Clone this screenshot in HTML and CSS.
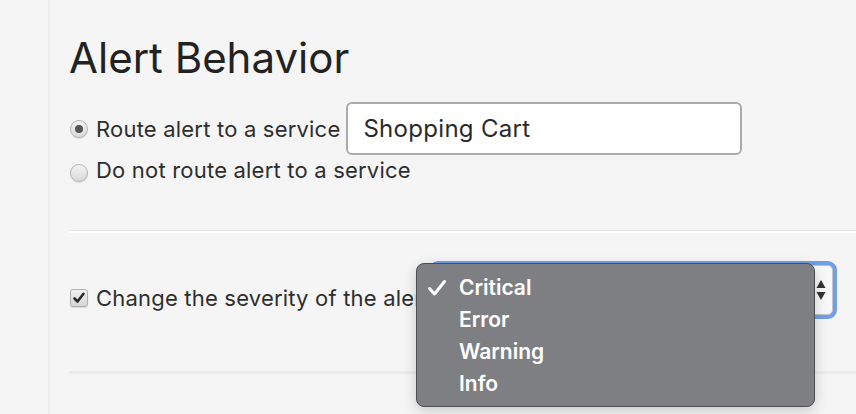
FILE: index.html
```html
<!DOCTYPE html>
<html>
<head>
<meta charset="utf-8">
<link rel="stylesheet" href="styles.css">
</head>
<body>
<div class="page">
  <div class="gutter"></div>
  <main class="content">
    <h1 class="title">Alert Behavior</h1>
    <div class="radio-row first">
      <span class="radio checked"></span>
      <span class="label">Route alert to a service</span>
      <div class="text-input">Shopping Cart</div>
    </div>
    <div class="radio-row second">
      <span class="radio"></span>
      <span class="label">Do not route alert to a service</span>
    </div>
    <div class="divider"></div>
    <div class="check-row">
      <span class="checkbox"><svg width="14" height="14" viewBox="0 0 14 14"><path d="M2.5 7.5 L5.5 10.5 L11.5 2.8" fill="none" stroke="#2a2a2a" stroke-width="2.6" stroke-linecap="round" stroke-linejoin="round"/></svg></span>
      <span class="label check-label">Change the severity of the alert</span>
      <div class="select">
        <span class="arrows"><svg width="10" height="22" viewBox="0 0 10 22"><path d="M5 1 L9.5 9 L0.5 9 Z" fill="#333"/><path d="M5 21 L9.5 13 L0.5 13 Z" fill="#333"/></svg></span>
      </div>
      <ul class="menu">
        <li class="item selected"><svg class="tick" width="20" height="18" viewBox="0 0 20 18"><path d="M2.5 9.5 L7.5 15 L17.5 2.5" fill="none" stroke="#ffffff" stroke-width="3" stroke-linecap="round" stroke-linejoin="round"/></svg>Critical</li>
        <li class="item">Error</li>
        <li class="item">Warning</li>
        <li class="item">Info</li>
      </ul>
    </div>
    <div class="divider bottom"></div>
  </main>
</div>
</body>
</html>
```
FILE: styles.css
```css
html, body {
  margin: 0;
  padding: 0;
  background: #f5f5f5;
  height: 100%;
  overflow: hidden;
}
body {
  font-family: Inter, "Noto Sans", "Liberation Sans", sans-serif;
  color: #2b2b2b;
}
.page {
  display: flex;
  height: 414px;
}
.gutter {
  width: 48px;
  border-right: 2px solid #ececec;
  flex: none;
}
.content {
  flex: 1;
  padding-left: 19px;
  padding-top: 32px;
}
.title {
  margin: 0;
  font-size: 42px;
  font-weight: 400;
  line-height: 52px;
  color: #222;
}
.radio-row {
  display: flex;
  align-items: center;
  font-size: 22px;
  letter-spacing: 0.2px;
}
.radio-row.first {
  margin-top: 18px;
  height: 53px;
}
.radio-row.second {
  height: 30px;
  margin-top: 0;
}
.label {
  white-space: nowrap;
  color: #2e2e2e;
}
.radio {
  width: 18px;
  height: 18px;
  border-radius: 50%;
  box-sizing: border-box;
  border: 1px solid #b5b5b5;
  background: linear-gradient(#f4f4f4, #d9d9d9);
  box-shadow: 0 1px 1px rgba(0,0,0,0.12);
  margin-left: 1px;
  margin-right: 8px;
  position: relative;
  flex: none;
}
.radio-row.second .radio { margin-top: 5px; }
.radio.checked::after {
  content: "";
  position: absolute;
  left: 4px;
  top: 4px;
  width: 8px;
  height: 8px;
  border-radius: 50%;
  background: #555;
}
.text-input {
  margin-left: 6px;
  width: 396px;
  height: 53px;
  box-sizing: border-box;
  border: 2px solid #ababab;
  border-radius: 6px;
  background: #fff;
  padding-left: 15px;
  display: flex;
  align-items: center;
  font-size: 24px;
  letter-spacing: 0.3px;
  color: #2a2a2a;
}
.divider {
  margin-top: 45px;
  border-top: 1px solid #e6e6e6;
  border-bottom: 2px solid #ffffff;
  height: 0;
}
.check-row {
  margin-top: 32px;
  height: 50px;
  display: flex;
  align-items: flex-start;
  font-size: 22px;
  letter-spacing: 0.2px;
  position: relative;
}
.checkbox {
  width: 18px;
  height: 18px;
  box-sizing: border-box;
  border: 1px solid #b0b0b0;
  border-radius: 3px;
  background: linear-gradient(#f0f0f0, #d6d6d6);
  box-shadow: 0 1px 1px rgba(0,0,0,0.12);
  margin-top: 24px;
  margin-left: 1px;
  margin-right: 8px;
  display: flex;
  align-items: center;
  justify-content: center;
  flex: none;
}
.check-label {
  margin-top: 18px;
  line-height: 30px;
}
.select {
  margin-left: 2px;
  width: 400px;
  height: 50px;
  flex: none;
  box-sizing: border-box;
  border: 1px solid #c4c4c4;
  border-radius: 5px;
  background: #f8f8f8;
  box-shadow: 0 0 0 4px #719ee8;
  display: flex;
  justify-content: flex-end;
  align-items: center;
  padding-right: 6px;
}
.arrows { display: flex; }
.menu {
  position: absolute;
  left: 347px;
  top: -2px;
  width: 399px;
  height: 144px;
  box-sizing: border-box;
  margin: 0;
  padding: 8px 0 0 0;
  list-style: none;
  background: #7e7f82;
  border: 1px solid #4e4e50;
  border-radius: 8px;
  box-shadow: 0 4px 14px rgba(0,0,0,0.18);
}
.item {
  height: 32px;
  line-height: 32px;
  padding-left: 42px;
  color: #ffffff;
  font-size: 21px;
  font-weight: 600;
  letter-spacing: 0;
  position: relative;
}
.tick {
  position: absolute;
  left: 10px;
  top: 7px;
}
.divider.bottom {
  margin-top: 56px;
  border-top: 3px solid #ebebeb;
  border-bottom: none;
}
```
